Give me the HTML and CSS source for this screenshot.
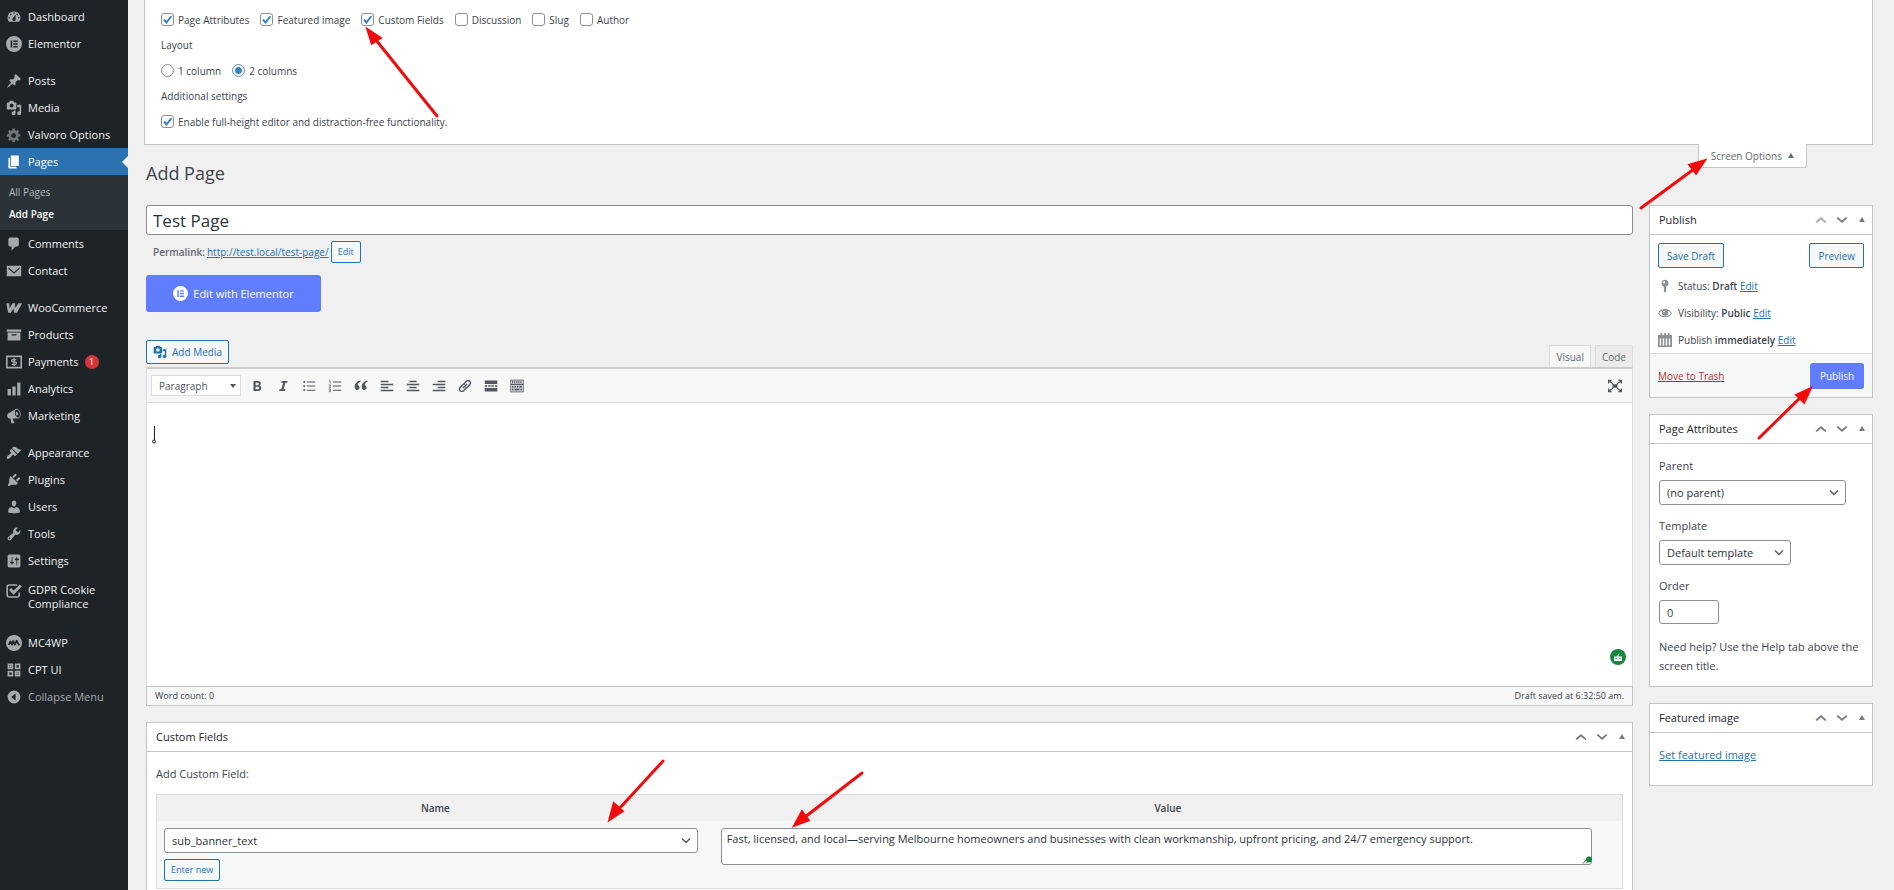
FILE: index.html
```html
<!DOCTYPE html>
<html lang="en">
<head>
    <meta charset="UTF-8">
    <meta name="viewport" content="width=device-width, initial-scale=1.0">
    <title>Add Page</title>
    <link rel="stylesheet" href="styles.css">
</head>
<body>
    <!-- Icon sprite -->
    <svg class="sprite" aria-hidden="true">
        <symbol id="i-dashboard" viewBox="0 0 20 20"><path d="M3.76 16h12.48A7.998 7.998 0 0 0 10 3a7.998 7.998 0 0 0-6.24 13zM10 4c.55 0 1 .45 1 1s-.45 1-1 1-1-.45-1-1 .45-1 1-1zM6 6c.55 0 1 .45 1 1s-.45 1-1 1-1-.45-1-1 .45-1 1-1zm8 0c.55 0 1 .45 1 1s-.45 1-1 1-1-.45-1-1 .45-1 1-1zm-5.37 5.55L12 7v6c0 1.1-.9 2-2 2s-2-.9-2-2c0-.57.24-1.08.63-1.45zM4 10c.55 0 1 .45 1 1s-.45 1-1 1-1-.45-1-1 .45-1 1-1zm12 0c.55 0 1 .45 1 1s-.45 1-1 1-1-.45-1-1 .45-1 1-1z" fill-rule="evenodd"/></symbol>
        <symbol id="i-elementor" viewBox="0 0 20 20"><path fill-rule="evenodd" d="M10 0a10 10 0 1 0 0 20a10 10 0 1 0 0-20zM5.8 5.5h1.9v9H5.8zM9 5.5h5.6v1.9H9zM9 9.1h5.6v1.8H9zM9 12.6h5.6v1.9H9z"/></symbol>
        <symbol id="i-post" viewBox="0 0 20 20"><path d="M10.44 3.02l1.82-1.82 6.36 6.35-1.83 1.82c-1.05-.68-2.48-.57-3.41.36l-.75.75c-.92.93-1.04 2.35-.35 3.41l-1.83 1.82-2.41-2.41-2.8 2.79c-.42.42-3.38 2.71-3.8 2.29s1.86-3.39 2.28-3.81l2.79-2.79L4.1 9.36l1.83-1.82c1.05.69 2.48.57 3.4-.36l.75-.75c.93-.92 1.05-2.35.36-3.41z"/></symbol>
        <symbol id="i-media" viewBox="0 0 20 20"><path fill-rule="evenodd" d="M13 11V4c0-.55-.45-1-1-1h-1.67L9 1H5L3.67 3H2c-.55 0-1 .45-1 1v7c0 .55.45 1 1 1h10c.55 0 1-.45 1-1zM7 4.5c1.38 0 2.5 1.12 2.5 2.5S8.38 9.5 7 9.5 4.5 8.38 4.5 7 5.62 4.5 7 4.5zM14 6h5v10.5c0 1.38-1.12 2.5-2.5 2.5S14 17.88 14 16.5s1.12-2.5 2.5-2.5c.17 0 .34.02.5.05V9h-3V6zm-4 8.05V13h2v3.5c0 1.38-1.12 2.5-2.5 2.5S7 17.88 7 16.5 8.12 14 9.5 14c.17 0 .34.02.5.05z"/></symbol>
        <symbol id="i-gear" viewBox="0 0 20 20"><path fill-rule="evenodd" d="M18 12h-2.18c-.17.7-.44 1.35-.81 1.93l1.54 1.54-2.1 2.1-1.54-1.54c-.58.36-1.23.63-1.91.79V19H8v-2.18c-.68-.16-1.33-.43-1.91-.79l-1.54 1.54-2.12-2.12 1.54-1.54c-.36-.58-.63-1.23-.79-1.91H1V9.03h2.17c.16-.7.44-1.35.8-1.94L2.43 5.55l2.1-2.1 1.54 1.54c.58-.37 1.24-.64 1.93-.81V2h3v2.18c.68.16 1.33.43 1.91.79l1.54-1.54 2.12 2.12-1.54 1.54c.36.59.64 1.24.8 1.94H18V12zm-8.5 1.5c1.66 0 3-1.34 3-3s-1.34-3-3-3-3 1.34-3 3 1.34 3 3 3z"/></symbol>
        <symbol id="i-page" viewBox="0 0 20 20"><path d="M6 15V2h10v13H6zm-1 1h8v2H3V5h2v11z"/></symbol>
        <symbol id="i-comment" viewBox="0 0 20 20"><path d="M5 2h9c1.1 0 2 .9 2 2v7c0 1.1-.9 2-2 2h-2l-5 5v-5H5c-1.1 0-2-.9-2-2V4c0-1.1.9-2 2-2z"/></symbol>
        <symbol id="i-mail" viewBox="0 0 20 20"><path fill-rule="evenodd" d="M1 3.5h18v13H1zM3 5.2l7 6.3 7-6.3v1.9l-7 6.3-7-6.3z"/></symbol>
        <symbol id="i-woo" viewBox="0 0 20 20"><path d="M.5 4h3.600l.4 6.500L8 4h3.200l.5 6L15.500 4H20l-6.300 12h-3.600l-.8-5.500L6.200 16H2.600z"/></symbol>
        <symbol id="i-archive" viewBox="0 0 20 20"><path fill-rule="evenodd" d="M19 3v3H1V3h18zM2 7h16v10H2V7zm11 3V9H7v1.5h6z"/></symbol>
        <symbol id="i-payments" viewBox="0 0 20 20"><path d="M1 3h18v14H1z" fill="none" stroke="currentColor" stroke-width="2"/><path d="M13 7H8.4q-1.2 0-1.2 1.4t1.2 1.5h3.4q1.2 0 1.2 1.5T11.8 13H7.2M10.1 5v10" fill="none" stroke="currentColor" stroke-width="1.6"/></symbol>
        <symbol id="i-chart" viewBox="0 0 20 20"><path d="M18 18V2h-4v16h4zm-6 0V7H8v11h4zm-6 0v-8H2v8h4z"/></symbol>
        <symbol id="i-megaphone" viewBox="0 0 20 20"><path fill-rule="evenodd" d="M18.15 5.94c.46 1.62.38 3.22-.02 4.48-.42 1.28-1.26 2.18-2.3 2.48-.16.06-.26.06-.4.06-.06.02-.12.02-.18.02-.06.02-.14.02-.22.02h-6.8l2.22 5.5c.02.14-.06.26-.14.34-.08.1-.24.16-.34.16H6.95c-.1 0-.26-.06-.34-.16-.08-.08-.16-.2-.14-.34l-1-5.5H4.25l-.02-.02c-.5.06-1.08-.18-1.54-.62s-.88-1.08-1.06-1.88c-.24-.8-.2-1.56-.02-2.2.18-.62.58-1.08 1.06-1.3l.02-.02 9-5.4c.1-.06.18-.1.24-.16.06-.04.14-.08.24-.12.16-.08.28-.12.5-.18 1.04-.3 2.24.1 3.22.98s1.84 2.24 2.26 3.86zm-2.58 5.98h-.02c.4-.1.74-.34 1.04-.7.58-.7.86-1.76.86-3.04 0-.64-.1-1.3-.28-1.98-.34-1.36-1.02-2.5-1.78-3.24s-1.68-1.1-2.46-.88c-.82.22-1.4.96-1.7 2-.32 1.04-.28 2.36.06 3.72.38 1.36 1 2.5 1.8 3.24.78.74 1.62 1.1 2.48.88zm-2.54-7.08c.22-.04.42-.02.62.04.38.16.76.48 1.02 1s.42 1.2.42 1.78c0 .3-.04.56-.12.8-.18.48-.44.84-.86.94-.34.1-.8-.06-1.14-.4s-.64-.86-.78-1.5c-.18-.62-.12-1.24.02-1.72s.48-.84.82-.94z"/></symbol>
        <symbol id="i-brush" viewBox="0 0 20 20"><path d="M14.48 11.06L7.41 3.99l1.5-1.5c.5-.56 2.3-.47 3.51.32 1.21.8 1.43 1.28 2.91 2.1 1.18.64 2.45 1.26 4.45.85zm-.71.71L6.7 4.7 4.93 6.47c-.39.39-.39 1.02 0 1.41l1.06 1.06c.39.39.39 1.03 0 1.42-.6.6-1.43 1.11-2.21 1.69-.35.26-.7.53-1.01.84C1.43 14.23.4 16.08 1.4 17.07c.99 1 2.84-.03 4.18-1.36.31-.31.58-.66.85-1.02.57-.78 1.08-1.61 1.69-2.21.39-.39 1.02-.39 1.41 0l1.06 1.06c.39.39 1.02.39 1.41 0z"/></symbol>
        <symbol id="i-plugin" viewBox="0 0 20 20"><path d="M13.11 4.36L9.87 7.6 8 5.73l3.24-3.24c.35-.34 1.05-.2 1.56.32.52.51.66 1.21.31 1.55zm-8 1.77l.91-1.12 9.01 9.01-1.19.84c-.71.71-2.63 1.16-3.82 1.16H6.14L4.9 17.26c-.59.59-1.54.59-2.12 0-.59-.58-.59-1.53 0-2.12l1.24-1.24v-3.88c0-1.13.4-3.19 1.09-3.89zm7.26 3.97l3.24-3.24c.34-.35 1.04-.21 1.55.31.52.51.66 1.21.31 1.55l-3.24 3.25z"/></symbol>
        <symbol id="i-user" viewBox="0 0 20 20"><path d="M10 9.25c-2.27 0-2.73-3.44-2.73-3.44C7 4.02 7.82 2 9.97 2c2.16 0 2.98 2.02 2.71 3.81 0 0-.41 3.44-2.68 3.44zm0 2.57L12.72 10c2.39 0 4.52 2.33 4.52 4.53v2.49s-3.65 1.13-7.24 1.13c-3.65 0-7.24-1.13-7.24-1.13v-2.49c0-2.25 1.94-4.48 4.47-4.48z"/></symbol>
        <symbol id="i-wrench" viewBox="0 0 20 20"><path fill-rule="evenodd" d="M16.68 9.77c-1.34 1.34-3.3 1.67-4.95.99l-5.41 6.52c-.99.99-2.59.99-3.58 0s-.99-2.59 0-3.57l6.52-5.42c-.68-1.65-.35-3.61.99-4.95 1.28-1.28 3.12-1.62 4.72-1.06l-2.89 2.89 2.82 2.82 2.86-2.87c.53 1.58.18 3.39-1.08 4.65zM3.81 16.21c.4.39 1.04.39 1.43 0 .4-.4.4-1.04 0-1.43-.39-.4-1.03-.4-1.43 0-.39.39-.39 1.03 0 1.43z"/></symbol>
        <symbol id="i-sliders" viewBox="0 0 20 20"><path fill-rule="evenodd" d="M18 16V4c0-1.1-.9-2-2-2H4c-1.1 0-2 .9-2 2v12c0 1.1.9 2 2 2h12c1.1 0 2-.9 2-2zM8 11h1c.55 0 1 .45 1 1s-.45 1-1 1H8v1.5c0 .28-.22.5-.5.5s-.5-.22-.5-.5V13H6c-.55 0-1-.45-1-1s.45-1 1-1h1V5.5c0-.28.22-.5.5-.5s.5.22.5.5V11zm5-2h-1c-.55 0-1-.45-1-1s.45-1 1-1h1V5.5c0-.28.22-.5.5-.5s.5.22.5.5V7h1c.55 0 1 .45 1 1s-.45 1-1 1h-1v5.5c0 .28-.22.5-.5.5s-.5-.22-.5-.5V9z"/></symbol>
        <symbol id="i-gdpr" viewBox="0 0 20 20"><path d="M14 2.5H4Q1.500 2.5 1.500 5v10Q1.500 17.5 4 17.5h10Q16.5 17.5 16.5 15v-3" fill="none" stroke="currentColor" stroke-width="2"/><path d="M5 7.5l4.500 4.500L18.500 3" fill="none" stroke="currentColor" stroke-width="3.600"/></symbol>
        <symbol id="i-mc4wp" viewBox="0 0 20 20"><circle cx="10" cy="10" r="10"/><path d="M3.500 12.500l2-4.500 2 4 1.500-4.500 2 4.500 2.200-5 3.300 6" fill="none" stroke="#1d2327" stroke-width="2.200" stroke-linejoin="round"/></symbol>
        <symbol id="i-cpt" viewBox="0 0 20 20"><path d="M2 2h7v7H2zM11 11h7v7h-7z"/><path d="M12 3h5v5h-5zM3 12h5v5H3z" fill="none" stroke="currentColor" stroke-width="2"/><path d="M4 4h1v1H4zM6 6h1v1H6zM6 4h1v1H6zM4 6h1v1H4zM13 13h1v1h-1zM15 15h1v1h-1zM15 13h1v1h-1zM13 15h1v1h-1z" fill="#1d2327"/></symbol>
        <symbol id="i-collapse" viewBox="0 0 20 20"><path fill-rule="evenodd" d="M10 2a8 8 0 1 0 0 16a8 8 0 1 0 0-16zM12 5.500v9L6.500 10z"/></symbol>
        <symbol id="i-up" viewBox="0 0 20 20"><path d="M2 14l8-7 8 7" fill="none" stroke="currentColor" stroke-width="3"/></symbol>
        <symbol id="i-down" viewBox="0 0 20 20"><path d="M2 6l8 7 8-7" fill="none" stroke="currentColor" stroke-width="3"/></symbol>
        <symbol id="i-toggle" viewBox="0 0 20 20"><path d="M10 4l6 10H4z"/></symbol>
        <symbol id="i-bold" viewBox="0 0 20 20"><path fill-rule="evenodd" d="M5 3h6.200C14 3 15.500 4.300 15.500 6.500c0 1.500-.8 2.600-2.100 3 1.700.4 2.700 1.600 2.700 3.400C16.100 15.500 14.300 17 11.400 17H5zM8 5.300v3.500h2.500c1.300 0 2-.6 2-1.800 0-1.100-.7-1.700-2-1.700zM8 11v3.700h2.700c1.500 0 2.200-.6 2.200-1.900 0-1.200-.8-1.800-2.300-1.800z"/></symbol>
        <symbol id="i-italic" viewBox="0 0 20 20"><path d="M8 3h8.500l-.5 2.200h-2.600l-2.500 9.600h2.600L13 17H4.500l.5-2.200h2.700l2.500-9.600H7.500z"/></symbol>
        <symbol id="i-ul" viewBox="0 0 20 20"><path d="M7 3.500h12V5H7zM7 9.300h12v1.500H7zM7 15.200h12v1.500H7zM2 3h2.500v2.500H2zM2 8.800h2.500v2.500H2zM2 14.700h2.500v2.500H2z"/></symbol>
        <symbol id="i-ol" viewBox="0 0 20 20"><path d="M7 3.500h12V5H7zM7 9.300h12v1.500H7zM7 15.200h12v1.500H7z"/><path d="M1.500 2.500H3v4M1 8.500h2.500v1.500L1.500 12h2.500M1 14h2.500v4H1M1.500 16h2" fill="none" stroke="currentColor"/></symbol>
        <symbol id="i-quote" viewBox="0 0 20 20"><path d="M9.500 3.500C6.600 4.600 5.200 7 5.500 9a3.400 3.400 0 1 1-4.200 4.300C-.2 8.500 3.500 3.500 9 2.300zM19.500 3.500c-2.900 1.100-4.300 3.500-4 5.500a3.400 3.400 0 1 1-4.200 4.300C9.800 8.500 13.500 3.500 19 2.300z"/></symbol>
        <symbol id="i-left" viewBox="0 0 20 20"><path d="M1 2.500h11v2H1zM1 6.800h18v2H1zM1 11.100h11v2H1zM1 15.400h18v2H1z"/></symbol>
        <symbol id="i-center" viewBox="0 0 20 20"><path d="M5 2.500h10v2H5zM1 6.800h18v2H1zM5 11.100h10v2H5zM1 15.400h18v2H1z"/></symbol>
        <symbol id="i-right" viewBox="0 0 20 20"><path d="M8 2.500h11v2H8zM1 6.800h18v2H1zM8 11.100h11v2H8zM1 15.400h18v2H1z"/></symbol>
        <symbol id="i-link" viewBox="0 0 20 20"><path d="M7 13l6-6M8 7.500l4-4.200a3.300 3.300 0 0 1 4.800 4.800L13 12a3.300 3.300 0 0 1-3 .8M12 12.500l-4 4.200a3.300 3.300 0 0 1-4.800-4.800L7 8a3.300 3.300 0 0 1 3-.8" fill="none" stroke="currentColor" stroke-width="2"/></symbol>
        <symbol id="i-more" viewBox="0 0 20 20"><path d="M1 2h18v5H1zM1 13h18v5H1zM1 9h3.500v2H1zM6 9h3.500v2H6zM10.500 9H14v2h-3.500zM15.500 9H19v2h-3.500z"/></symbol>
        <symbol id="i-kitchen" viewBox="0 0 20 20"><path d="M.5 1.500h19v17H.5z" fill="#c8cacc" stroke="currentColor"/><path d="M1 7h18v1.500H1z"/><path d="M3 3h1.200v3H3zM6 3h1.200v3H6zM9 3h1.200v3H9zM12 3h1.200v3H12zM15 3h1.200v3H15zM3 10h2v2H3zM6.500 10h2v2h-2zM10 10h2v2h-2zM13.500 10h3.500v2h-3.500zM3 14h2v2H3zM6.500 14h7v2h-7zM15 14h2v2h-2z"/></symbol>
        <symbol id="i-expand" viewBox="0 0 20 20"><path d="M0 1h6L0 7zM20 1h-6l6 6zM0 19h6l-6-6zM20 19h-6l6-6zM6.500 7.500h7v5h-7z"/><path d="M2 3l6 5M18 3l-6 5M2 17l6-5M18 17l-6-5" stroke="currentColor" stroke-width="1.600"/></symbol>
        <symbol id="i-pin" viewBox="0 0 20 20"><path fill-rule="evenodd" d="M10 1a5 5 0 0 1 1.600 9.700V18L10 19.500 8.400 18v-7.300A5 5 0 0 1 10 1zM8.500 3.500a1.300 1.300 0 1 0 .1 2.500a1.300 1.300 0 1 0-.1-2.500z"/></symbol>
        <symbol id="i-eye" viewBox="0 0 20 20"><path d="M.8 10.300C5 3.500 15 3.500 19.200 10.300 15 17 5 17 .8 10.300z" fill="none" stroke="currentColor" stroke-width="1.500"/><circle cx="10" cy="9.500" r="4.500"/><circle cx="8.500" cy="8" r="1.200" fill="#fff"/></symbol>
        <symbol id="i-calendar" viewBox="0 0 20 20"><path fill-rule="evenodd" d="M0 3h3.500V0H6v3h2.800V0h2.400v3H14V0h2.500v3H20v17H0zM2.500 8v10h2V8zm4.300 0v10h2V8zm4.300 0v10h2V8zm4.300 0v10h2V8z"/></symbol>
    </svg>

    <div class="wrap">
        <nav class="menu" aria-label="Main menu">
            <a class="menu-item" href="#"><svg class="icon"><use href="#i-dashboard"/></svg>Dashboard</a>
            <a class="menu-item" href="#"><svg class="icon"><use href="#i-elementor"/></svg>Elementor</a>
            <div class="separator"></div>
            <a class="menu-item" href="#"><svg class="icon"><use href="#i-post"/></svg>Posts</a>
            <a class="menu-item" href="#"><svg class="icon"><use href="#i-media"/></svg>Media</a>
            <a class="menu-item dim" href="#"><svg class="icon"><use href="#i-gear"/></svg>Valvoro Options</a>
            <a class="menu-item current" href="#"><svg class="icon"><use href="#i-page"/></svg>Pages</a>
            <div class="submenu">
                <a href="#">All Pages</a>
                <a class="active" href="#">Add Page</a>
            </div>
            <a class="menu-item" href="#"><svg class="icon"><use href="#i-comment"/></svg>Comments</a>
            <a class="menu-item" href="#"><svg class="icon"><use href="#i-mail"/></svg>Contact</a>
            <div class="separator"></div>
            <a class="menu-item" href="#"><svg class="icon"><use href="#i-woo"/></svg>WooCommerce</a>
            <a class="menu-item" href="#"><svg class="icon"><use href="#i-archive"/></svg>Products</a>
            <a class="menu-item" href="#"><svg class="icon"><use href="#i-payments"/></svg>Payments <span class="count">1</span></a>
            <a class="menu-item" href="#"><svg class="icon"><use href="#i-chart"/></svg>Analytics</a>
            <a class="menu-item" href="#"><svg class="icon"><use href="#i-megaphone"/></svg>Marketing</a>
            <div class="separator"></div>
            <a class="menu-item" href="#"><svg class="icon"><use href="#i-brush"/></svg>Appearance</a>
            <a class="menu-item" href="#"><svg class="icon"><use href="#i-plugin"/></svg>Plugins</a>
            <a class="menu-item" href="#"><svg class="icon"><use href="#i-user"/></svg>Users</a>
            <a class="menu-item" href="#"><svg class="icon"><use href="#i-wrench"/></svg>Tools</a>
            <a class="menu-item" href="#"><svg class="icon"><use href="#i-sliders"/></svg>Settings</a>
            <a class="menu-item tall" href="#"><svg class="icon"><use href="#i-gdpr"/></svg>GDPR Cookie Compliance</a>
            <div class="separator"></div>
            <a class="menu-item" href="#"><svg class="icon"><use href="#i-mc4wp"/></svg>MC4WP</a>
            <a class="menu-item" href="#"><svg class="icon"><use href="#i-cpt"/></svg>CPT UI</a>
            <button class="menu-item collapse" type="button"><svg class="icon"><use href="#i-collapse"/></svg>Collapse Menu</button>
        </nav>

        <main class="content">
            <section class="screen-meta">
                <div class="option-row">
                    <label><input type="checkbox" checked>Page Attributes</label>
                    <label><input type="checkbox" checked>Featured image</label>
                    <label class="pointed"><input type="checkbox" checked>Custom Fields
                        <svg class="arrow arrow-fields" viewBox="0 0 76 94"><path d="M72 89L11 13" /><path class="head" d="M3 3l12 8-8 5z"/></svg>
                    </label>
                    <label><input type="checkbox">Discussion</label>
                    <label><input type="checkbox">Slug</label>
                    <label><input type="checkbox">Author</label>
                </div>
                <h2>Layout</h2>
                <div class="option-row">
                    <label><input type="radio" name="columns">1 column</label>
                    <label><input type="radio" name="columns" checked>2 columns</label>
                </div>
                <h2>Additional settings</h2>
                <div class="option-row">
                    <label><input type="checkbox" checked>Enable full-height editor and distraction-free functionality.</label>
                </div>
            </section>

            <div class="title-bar">
                <h1>Add Page</h1>
                <div class="screen-tab pointed">
                    <button type="button">Screen Options <span class="caret-up"></span></button>
                    <svg class="arrow arrow-screen" viewBox="0 0 70 54"><path d="M4 50L57 11"/><path class="head" d="M67 3l-8 12-6-8z"/></svg>
                </div>
            </div>

            <form class="columns">
                <div class="main-col">
                    <input class="page-title" type="text" value="Test Page" aria-label="Page title">
                    <div class="permalink">
                        <strong>Permalink:</strong>
                        <a href="#">http://test.local/test-page/</a>
                        <button class="button small" type="button">Edit</button>
                    </div>
                    <button class="elementor-button" type="button"><svg class="icon"><use href="#i-elementor"/></svg>Edit with Elementor</button>

                    <div class="editor-tools">
                        <button class="button add-media" type="button"><svg class="icon"><use href="#i-media"/></svg>Add Media</button>
                        <div class="tabs">
                            <button class="tab active" type="button">Visual</button>
                            <button class="tab" type="button">Code</button>
                        </div>
                    </div>
                    <div class="editor">
                        <div class="toolbar">
                            <select aria-label="Format"><option>Paragraph</option></select>
                            <button type="button" aria-label="Bold"><svg class="icon"><use href="#i-bold"/></svg></button>
                            <button type="button" aria-label="Italic"><svg class="icon"><use href="#i-italic"/></svg></button>
                            <button type="button" aria-label="Bulleted list"><svg class="icon"><use href="#i-ul"/></svg></button>
                            <button type="button" aria-label="Numbered list"><svg class="icon"><use href="#i-ol"/></svg></button>
                            <button type="button" aria-label="Blockquote"><svg class="icon"><use href="#i-quote"/></svg></button>
                            <button type="button" aria-label="Align left"><svg class="icon"><use href="#i-left"/></svg></button>
                            <button type="button" aria-label="Align center"><svg class="icon"><use href="#i-center"/></svg></button>
                            <button type="button" aria-label="Align right"><svg class="icon"><use href="#i-right"/></svg></button>
                            <button type="button" aria-label="Insert link"><svg class="icon"><use href="#i-link"/></svg></button>
                            <button type="button" aria-label="Read more tag"><svg class="icon"><use href="#i-more"/></svg></button>
                            <button type="button" aria-label="Toolbar toggle"><svg class="icon"><use href="#i-kitchen"/></svg></button>
                            <button class="expand" type="button" aria-label="Distraction-free mode"><svg class="icon"><use href="#i-expand"/></svg></button>
                        </div>
                        <div class="editor-body">
                            <svg class="cursor" viewBox="0 0 6 18"><path d="M3.500 0v14" stroke="#1d2327"/><circle cx="3" cy="15.500" r="1.500" fill="none" stroke="#1d2327"/></svg>
                            <svg class="assistant" viewBox="0 0 16 16"><circle cx="8" cy="8" r="8" fill="#15883e"/><path fill="#fff" fill-rule="evenodd" d="M4 7.500h3.500V6L9 4.500 9.500 5l-1 1.200v1.300H12v4.500H4zM5.500 9v1.200h1.200V9zm3.800 0v1.200h1.200V9z"/></svg>
                        </div>
                        <div class="status-bar"><span>Word count: 0</span><span>Draft saved at 6:32:50 am.</span></div>
                    </div>

                    <section class="box">
                        <header>
                            <h2>Custom Fields</h2>
                            <button type="button" aria-label="Move up"><svg class="icon"><use href="#i-up"/></svg></button>
                            <button type="button" aria-label="Move down"><svg class="icon"><use href="#i-down"/></svg></button>
                            <button class="toggle" type="button" aria-label="Toggle panel"><svg class="icon"><use href="#i-toggle"/></svg></button>
                        </header>
                        <div class="fields">
                            <p>Add Custom Field:</p>
                            <table>
                                <thead>
                                    <tr>
                                        <th id="field-name">Name</th>
                                        <th id="field-value">Value</th>
                                    </tr>
                                </thead>
                                <tbody>
                                    <tr>
                                        <td>
                                            <div class="pointed">
                                                <select class="select" aria-labelledby="field-name"><option>sub_banner_text</option></select>
                                                <svg class="arrow arrow-name" viewBox="0 0 60 66"><path d="M56 4L11 53"/><path class="head" d="M3 62l4-15 8 7z"/></svg>
                                            </div>
                                            <button class="button small" type="button">Enter new</button>
                                        </td>
                                        <td>
                                            <div class="pointed">
                                                <textarea aria-labelledby="field-value">Fast, licensed, and local—serving Melbourne homeowners and businesses with clean workmanship, upfront pricing, and 24/7 emergency support.</textarea>
                                                <svg class="leaf" viewBox="0 0 10 8"><path d="M1 7.500L6 2M4 7.500l3-3" stroke="#555"/><circle cx="7" cy="3.500" r="3" fill="#15883e"/></svg>
                                                <svg class="arrow arrow-value" viewBox="0 0 74 60"><path d="M70 4L13 48"/><path class="head" d="M3 56l7-13 6 8z"/></svg>
                                            </div>
                                        </td>
                                    </tr>
                                </tbody>
                            </table>
                        </div>
                    </section>
                </div>

                <aside class="side-col">
                    <section class="box">
                        <header>
                            <h2>Publish</h2>
                            <button class="faded" type="button" aria-label="Move up"><svg class="icon"><use href="#i-up"/></svg></button>
                            <button type="button" aria-label="Move down"><svg class="icon"><use href="#i-down"/></svg></button>
                            <button class="toggle" type="button" aria-label="Toggle panel"><svg class="icon"><use href="#i-toggle"/></svg></button>
                        </header>
                        <div class="publish">
                            <div class="publish-actions">
                                <button class="button" type="button">Save Draft</button>
                                <button class="button" type="button">Preview</button>
                            </div>
                            <div class="publish-row"><svg class="icon"><use href="#i-pin"/></svg><span>Status: <b>Draft</b> <a href="#">Edit</a></span></div>
                            <div class="publish-row"><svg class="icon"><use href="#i-eye"/></svg><span>Visibility: <b>Public</b> <a href="#">Edit</a></span></div>
                            <div class="publish-row"><svg class="icon"><use href="#i-calendar"/></svg><span>Publish <b>immediately</b> <a href="#">Edit</a></span></div>
                        </div>
                        <footer>
                            <a class="trash" href="#">Move to Trash</a>
                            <div class="pointed">
                                <button class="primary" type="button">Publish</button>
                                <svg class="arrow arrow-publish" viewBox="0 0 58 56"><path d="M4 52L46 11"/><path class="head" d="M55 3l-6 13-7-7z"/></svg>
                            </div>
                        </footer>
                    </section>

                    <section class="box">
                        <header>
                            <h2>Page Attributes</h2>
                            <button type="button" aria-label="Move up"><svg class="icon"><use href="#i-up"/></svg></button>
                            <button type="button" aria-label="Move down"><svg class="icon"><use href="#i-down"/></svg></button>
                            <button class="toggle" type="button" aria-label="Toggle panel"><svg class="icon"><use href="#i-toggle"/></svg></button>
                        </header>
                        <div class="attributes">
                            <label for="parent">Parent</label>
                            <select class="select parent" id="parent"><option>(no parent)</option></select>
                            <label for="template">Template</label>
                            <select class="select template" id="template"><option>Default template</option></select>
                            <label for="order">Order</label>
                            <input class="order" id="order" type="text" value="0">
                            <p>Need help? Use the Help tab above the screen title.</p>
                        </div>
                    </section>

                    <section class="box">
                        <header>
                            <h2>Featured image</h2>
                            <button type="button" aria-label="Move up"><svg class="icon"><use href="#i-up"/></svg></button>
                            <button type="button" aria-label="Move down"><svg class="icon"><use href="#i-down"/></svg></button>
                            <button class="toggle" type="button" aria-label="Toggle panel"><svg class="icon"><use href="#i-toggle"/></svg></button>
                        </header>
                        <div class="featured"><a href="#">Set featured image</a></div>
                    </section>
                </aside>
            </form>
        </main>
    </div>
</body>
</html>
```
FILE: styles.css
```css
* {
    box-sizing: border-box;
}
body {
    margin: 0;
    background-color: #f0f0f1;
    color: #3c434a;
    font-family: "Open Sans", "Noto Sans", sans-serif;
    font-size: 10px;
    line-height: 16px;
}
button, input, select, textarea {
    font: inherit;
    color: inherit;
    margin: 0;
}
button {
    padding: 0;
    border: 0;
    background: none;
}
a {
    color: #2271b1;
}
h1, h2, p {
    margin: 0;
}
.sprite {
    display: none;
}
.icon {
    width: 16px;
    height: 16px;
    flex: none;
    fill: currentColor;
}
.wrap {
    display: flex;
    height: 100vh;
    overflow: hidden;
}

/* Left menu */
.menu {
    width: 128px;
    flex: none;
    padding-top: 3px;
    background-color: #1d2327;
}
.menu-item {
    display: flex;
    align-items: center;
    gap: 6px;
    width: 100%;
    min-height: 27px;
    padding-left: 6px;
    color: #f0f0f1;
    font-size: 11px;
    line-height: 14px;
    text-align: left;
    text-decoration: none;
}
.menu-item .icon {
    color: #a7aaad;
}
.menu-item.dim .icon {
    color: #72777c;
}
.menu-item.current {
    position: relative;
    background-color: #2c73b1;
    color: #fff;
}
.menu-item.current .icon {
    color: #fff;
}
.menu-item.current::after {
    content: "";
    position: absolute;
    right: 0;
    border: 6px solid transparent;
    border-right-color: #f0f0f1;
    border-left: 0;
}
.menu-item.tall {
    align-items: flex-start;
    padding: 9px 30px 8px 6px;
}
.menu-item.collapse {
    color: #a7aaad;
}
.separator {
    height: 10px;
}
.submenu {
    padding: 6px 0 5px 9px;
    background-color: #2c3338;
}
.submenu a {
    display: block;
    color: #b4b9be;
    line-height: 22px;
    text-decoration: none;
}
.submenu a.active {
    color: #fff;
    font-weight: 600;
}
.count {
    width: 14px;
    height: 14px;
    border-radius: 50%;
    background-color: #d63638;
    color: #fff;
    font-size: 9px;
    text-align: center;
}

/* Screen options */
.content {
    flex: 1;
    min-width: 0;
    padding: 0 21px 0 16px;
}
.screen-meta {
    padding: 10px 16px 13px;
    border: 1px solid #c3c4c7;
    border-top: 0;
    background-color: #fff;
}
.option-row {
    display: flex;
    align-items: center;
    gap: 11px;
    height: 19px;
}
.option-row label {
    display: flex;
    align-items: center;
    gap: 4px;
}
.screen-meta h2 {
    padding: 8px 0;
    font-size: 10px;
    font-weight: 500;
    line-height: 16px;
}
input[type="checkbox"], input[type="radio"] {
    appearance: none;
    width: 13px;
    height: 13px;
    border: 1px solid #8c8f94;
    border-radius: 3px;
    background: #fff center / 13px no-repeat;
}
input[type="checkbox"]:checked {
    background-image: url("data:image/svg+xml,%3Csvg xmlns='http://www.w3.org/2000/svg' viewBox='0 0 20 20'%3E%3Cpath d='M4.500 10l4 4.500L16 5' fill='none' stroke='%233582c4' stroke-width='3'/%3E%3C/svg%3E");
}
input[type="radio"] {
    border-radius: 50%;
}
input[type="radio"]:checked {
    border-color: #5d8fb9;
    background-image: radial-gradient(circle, #3582c4 3px, transparent 4px);
}

.title-bar {
    display: flex;
    justify-content: space-between;
    align-items: flex-start;
    height: 60px;
    padding: 0 66px 0 2px;
}
h1 {
    padding-top: 16px;
    font-size: 18px;
    font-weight: 400;
    line-height: 24px;
}
.screen-tab button {
    display: flex;
    align-items: center;
    gap: 6px;
    height: 24px;
    margin-top: -1px;
    padding: 0 12px;
    border: 1px solid #c3c4c7;
    border-top: 0;
    border-radius: 0 0 3px 3px;
    background-color: #fff;
    color: #646970;
}
.caret-up {
    border: 3px solid transparent;
    border-top: 0;
    border-bottom: 5px solid #646970;
}

/* Columns */
.columns {
    display: flex;
    align-items: flex-start;
    gap: 16px;
    padding-left: 2px;
}
.main-col {
    flex: 1;
    min-width: 0;
}
.side-col {
    width: 224px;
    flex: none;
}
.page-title {
    display: block;
    width: 100%;
    height: 30px;
    padding: 0 6px;
    border: 1px solid #8c8f94;
    border-radius: 3px;
    background-color: #fff;
    color: #2c3338;
    font-size: 17px;
}
.permalink {
    display: flex;
    align-items: center;
    gap: 2px;
    height: 34px;
    padding: 0 7px;
    color: #646970;
}
.permalink strong {
    font-weight: 600;
}
.button {
    height: 25px;
    padding: 0 8px;
    border: 1px solid #2271b1;
    border-radius: 2px;
    background-color: #f6f7f7;
    color: #2271b1;
}
.button.small {
    height: 22px;
    padding: 0 6px;
    font-size: 9px;
}
.elementor-button {
    display: flex;
    align-items: center;
    justify-content: center;
    gap: 5px;
    width: 175px;
    height: 37px;
    margin-top: 6px;
    border-radius: 3px;
    background-color: #617dff;
    color: #fff;
    font-size: 11px;
}
.elementor-button .icon {
    width: 15px;
    height: 15px;
}
.editor-tools {
    display: flex;
    justify-content: space-between;
    align-items: flex-end;
    margin-top: 28px;
}
.add-media {
    display: flex;
    align-items: center;
    gap: 5px;
    height: 24px;
    margin-bottom: 3px;
    padding: 0 6px;
}
.add-media .icon {
    width: 14px;
    height: 14px;
}
.tabs {
    display: flex;
    gap: 4px;
}
.tab {
    height: 22px;
    padding: 0 6px;
    border: 1px solid #dcdcde;
    border-bottom: 0;
    background-color: #ebebec;
    color: #646970;
}
.tab.active {
    background-color: #f6f7f7;
}
.editor {
    border: 1px solid #dcdcde;
    border-top: 2px solid #c9cbcd;
    background-color: #fff;
}
.toolbar {
    display: flex;
    align-items: center;
    gap: 10px;
    height: 34px;
    padding: 0 9px 0 4px;
    border-bottom: 1px solid #dcdcde;
    background-color: #f6f7f7;
    color: #50575e;
}
.toolbar select {
    appearance: none;
    width: 90px;
    height: 21px;
    margin-right: -2px;
    padding: 0 7px;
    border: 1px solid #dcdcde;
    background: #fff url("data:image/svg+xml,%3Csvg xmlns='http://www.w3.org/2000/svg' viewBox='0 0 6 4'%3E%3Cpath d='M0 0h6L3 4z' fill='%2350575e'/%3E%3C/svg%3E") right 4px center / 6px no-repeat;
}
.toolbar button {
    display: flex;
    justify-content: center;
    width: 16px;
}
.toolbar .icon {
    width: 14px;
    height: 14px;
}
.toolbar .expand {
    margin-left: auto;
}
.editor-body {
    position: relative;
    height: 283px;
    padding: 23px 4px;
}
.cursor {
    display: block;
    width: 6px;
    height: 18px;
}
.assistant {
    position: absolute;
    right: 6px;
    bottom: 21px;
    width: 16px;
    height: 16px;
}
.status-bar {
    display: flex;
    justify-content: space-between;
    margin: 0 -1px -1px;
    padding: 1px 8px;
    border: 1px solid #c3c4c7;
    background-color: #f6f7f7;
    font-size: 9px;
}

/* Boxes */
.box {
    margin-bottom: 16px;
    border: 1px solid #c3c4c7;
    background-color: #fff;
}
.main-col .box {
    margin-top: 16px;
}
.box header {
    display: flex;
    align-items: center;
    gap: 9px;
    height: 29px;
    padding: 0 5px 0 9px;
    border-bottom: 1px solid #c3c4c7;
}
.box header h2 {
    flex: 1;
    color: #1d2327;
    font-size: 11px;
    font-weight: 500;
}
.box header button {
    display: flex;
    color: #787c82;
}
.box header .icon {
    width: 12px;
    height: 12px;
}
.box header .toggle .icon {
    width: 10px;
    height: 10px;
}
.box header .faded {
    color: #a7aaad;
}
.fields {
    padding: 14px 9px;
    font-size: 11px;
}
.fields p {
    margin-bottom: 12px;
}
.fields table {
    width: 100%;
    border: 1px solid #dcdcde;
    border-spacing: 0;
    background-color: #f6f7f7;
    table-layout: fixed;
}
.fields th {
    height: 26px;
    padding: 0;
    background-color: #f0f0f1;
    font-size: 10px;
    font-weight: 600;
}
.fields th:first-child {
    width: 38%;
}
.fields td {
    padding: 7px 16px 7px 7px;
    vertical-align: top;
}
.fields .button {
    margin-top: 6px;
}
.fields td:last-child {
    padding-right: 30px;
}
.select {
    appearance: none;
    display: block;
    height: 25px;
    padding: 0 24px 0 7px;
    border: 1px solid #8c8f94;
    border-radius: 3px;
    background: #fff url("data:image/svg+xml,%3Csvg xmlns='http://www.w3.org/2000/svg' viewBox='0 0 10 6'%3E%3Cpath d='M1 .5l4 4 4-4' fill='none' stroke='%2350575e' stroke-width='1.400'/%3E%3C/svg%3E") right 6px center / 10px no-repeat;
    color: #2c3338;
    font-size: 11px;
}
.fields .select {
    width: 100%;
}
textarea {
    display: block;
    width: 100%;
    height: 37px;
    padding: 2px 5px;
    border: 1px solid #8c8f94;
    border-radius: 3px;
    background-color: #fff;
    color: #2c3338;
    resize: none;
}
.leaf {
    position: absolute;
    right: 0;
    bottom: 1px;
    width: 10px;
    height: 8px;
}

/* Side boxes */
.publish {
    padding: 8px 8px 0;
}
.publish-actions {
    display: flex;
    justify-content: space-between;
    margin-bottom: 4px;
}
.publish-row {
    display: flex;
    align-items: center;
    gap: 6px;
    height: 27px;
}
.publish-row .icon {
    width: 14px;
    height: 14px;
    color: #8c8f94;
}
.publish-row b {
    font-weight: 600;
}
.box footer {
    display: flex;
    justify-content: space-between;
    align-items: center;
    height: 44px;
    padding: 0 8px;
    border-top: 1px solid #dcdcde;
    background-color: #f6f7f7;
}
.trash {
    color: #b32d2e;
}
.primary {
    display: block;
    width: 54px;
    height: 26px;
    border-radius: 3px;
    background-color: #617dff;
    color: #fff;
}
.attributes {
    display: flex;
    flex-direction: column;
    align-items: flex-start;
    padding: 14px 9px 11px;
    font-size: 11px;
}
.attributes label {
    margin-bottom: 6px;
}
.attributes .select, .order {
    margin-bottom: 13px;
}
.parent {
    width: 187px;
}
.template {
    width: 132px;
}
.order {
    width: 60px;
    height: 24px;
    padding: 0 7px;
    border: 1px solid #8c8f94;
    border-radius: 3px;
    background-color: #fff;
}
.attributes p {
    line-height: 19px;
}
.featured {
    padding: 14px 9px 22px;
    font-size: 11px;
}

/* Red pointers over the controls */
.pointed {
    position: relative;
}
.arrow {
    position: absolute;
    z-index: 2;
    fill: none;
    stroke: #f10c0c;
    stroke-width: 3;
    stroke-linecap: round;
    pointer-events: none;
}
.arrow .head {
    fill: #f10c0c;
}
.arrow-fields {
    left: 4px;
    top: 15px;
    width: 76px;
    height: 94px;
}
.arrow-screen {
    right: 100px;
    top: 13px;
    width: 70px;
    height: 54px;
}
.arrow-name {
    right: 31px;
    bottom: 30px;
    width: 60px;
    height: 66px;
}
.arrow-value {
    left: 71px;
    bottom: 36px;
    width: 74px;
    height: 60px;
}
.arrow-publish {
    right: 51px;
    top: 23px;
    width: 58px;
    height: 56px;
}
```
